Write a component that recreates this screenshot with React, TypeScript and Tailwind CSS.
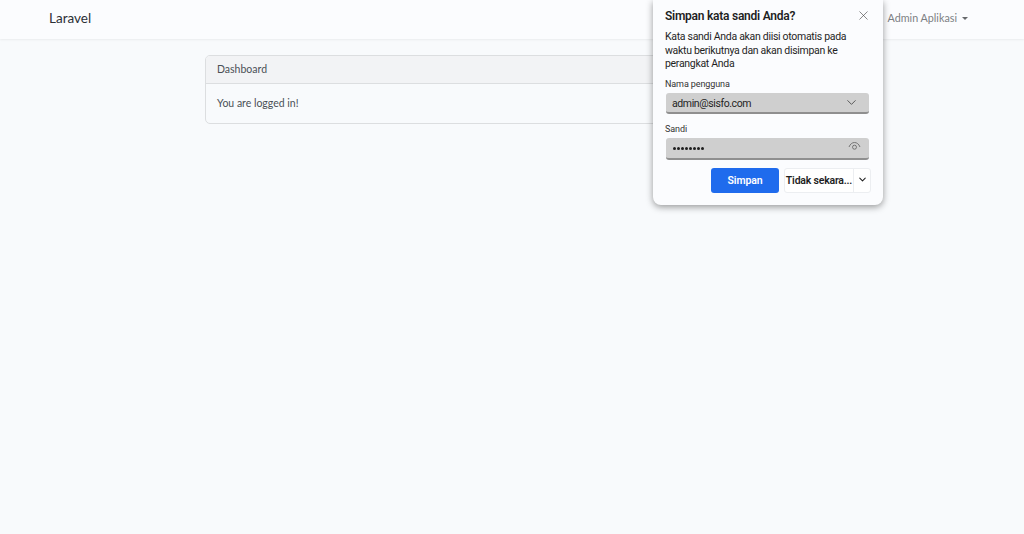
import React from 'react';
import { ChevronDown, X } from 'lucide-react';

const pageFont = "font-['Lato','Noto_Sans',sans-serif]";
const popupFont = "font-['Roboto','Noto_Sans',sans-serif]";

const SavePasswordBubble: React.FC = () => (
  <div className={`absolute left-[653px] top-0 h-[205px] w-[230px] rounded-b-[8px] bg-[#fbfcfe] px-3 pt-[9px] text-[#1f1f1f] shadow-[0_2px_7px_rgba(0,0,0,0.4)] ${popupFont}`}>
    <div className="flex items-start justify-between">
      <h2 className="text-[12px] leading-[15px] font-semibold tracking-[-0.25px]">Simpan kata sandi Anda?</h2>
      <X size={15} strokeWidth={1} className="-mt-[1px] text-[#444]" />
    </div>
    <p className="mt-[6px] text-[10.5px] leading-[13.5px] tracking-[-0.3px]">
      Kata sandi Anda akan diisi otomatis pada
      <br />
      waktu berikutnya dan akan disimpan ke
      <br />
      perangkat Anda
    </p>
    <label className="mt-[8px] block text-[9px] leading-[11px] tracking-[-0.1px] text-[#333]">Nama pengguna</label>
    <div className="ml-[1px] mr-[2px] mt-[3px] flex h-[21px] items-center justify-between rounded-[3px] border-b-2 border-[#8f8f8f] bg-[#cfcfcf] pl-[6px] pr-[10px]">
      <span className="pt-[3px] text-[10.5px] tracking-[-0.4px] text-[#1f1f1f]">admin@sisfo.com</span>
      <ChevronDown size={15} strokeWidth={1.2} className="text-[#333]" />
    </div>
    <label className="mt-[10px] block text-[9px] leading-[11px] tracking-[-0.1px] text-[#333]">Sandi</label>
    <div className="ml-[1px] mr-[2px] mt-[3px] flex h-[22px] items-center justify-between rounded-[3px] border-b-2 border-[#8f8f8f] bg-[#cfcfcf] pl-[7px] pr-[8px]">
      <span className="flex gap-[1px] pt-[1px]">
        {[0, 1, 2, 3, 4, 5, 6, 7].map((i) => (
          <span key={i} className="h-[3px] w-[3px] rounded-full bg-[#1f1f1f]" />
        ))}
      </span>
      <svg width="13" height="10" viewBox="0 0 13 10" fill="none" stroke="#6b6b6b" strokeWidth="0.9" className="-mt-[3px]">
        <path d="M1 6c1.2-3 3.2-4.5 5.5-4.5S10.8 3 12 6" />
        <circle cx="6.5" cy="6.2" r="2" />
      </svg>
    </div>
    <div className="mt-[8px] flex justify-end">
      <button className="mr-[5px] h-[25px] w-[68px] rounded-[3px] bg-[#1f6bed] pt-[2px] text-[10.5px] font-semibold tracking-[-0.1px] text-white">
        Simpan
      </button>
      <div className="flex h-[25px] w-[87px] items-center rounded-[3px] border border-[#eceef1] bg-white text-[10.5px] font-semibold tracking-[-0.2px] text-[#1f1f1f]">
        <span className="w-[68px] whitespace-nowrap pt-[2px] text-center">Tidak sekara...</span>
        <span className="flex h-full flex-1 items-center justify-center border-l border-[#eceef1] pb-[2px]">
          <ChevronDown size={11} strokeWidth={2.2} />
        </span>
      </div>
    </div>
  </div>
);

const App: React.FC = () => {
  return (
    <div className={`relative h-[534px] w-[1024px] overflow-hidden bg-[#f8fafc] text-[#4a5056] ${pageFont}`}>
      <nav className="flex h-[39px] items-center justify-between bg-[#fbfcfe] pl-[49px] pr-[56px] shadow-[0_1px_2px_rgba(0,0,0,0.06)]">
        <span className="-mt-[2px] text-[13.5px] text-[#2b3036]">Laravel</span>
        <span className="-mt-[2px] flex items-center gap-[5px] text-[10.75px] text-[#7b7f83]">
          Admin Aplikasi
          <span className="h-0 w-0 border-x-[3px] border-t-[3px] border-x-transparent border-t-[#66696c]" />
        </span>
      </nav>

      <main className="flex justify-center pt-[16px]">
        <div className="-ml-[1px] h-[69px] w-[613px] overflow-hidden rounded-[5px] border border-[#dcdee0] text-[10.5px]">
          <div className="flex h-[28px] items-center border-b border-[#dcdee0] bg-[#f2f3f5] px-[11px]">
            Dashboard
          </div>
          <div className="flex h-[39px] items-center px-[11px]">You are logged in!</div>
        </div>
      </main>

      <SavePasswordBubble />
    </div>
  );
};

export default App;
